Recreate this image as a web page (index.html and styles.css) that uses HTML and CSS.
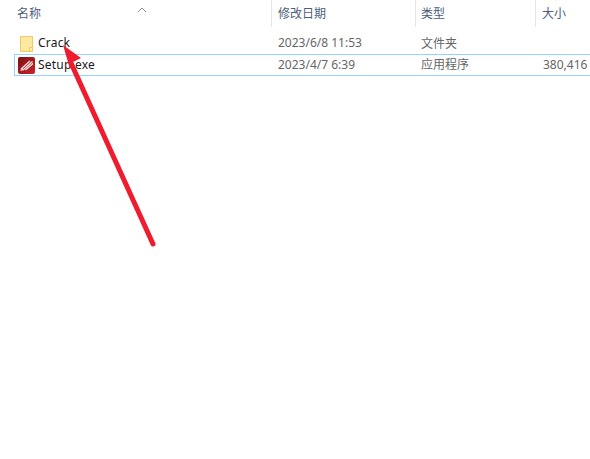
FILE: index.html
```html
<!DOCTYPE html>
<html lang="zh-CN">

<head>
    <meta charset="UTF-8">
    <title>文件列表</title>
    <link rel="stylesheet" href="styles.css">
</head>

<body>
    <div class="explorer">
        <div class="sort-arrow">
            <svg width="10" height="6" viewBox="0 0 10 6">
                <path d="M1 5 L5 1 L9 5" fill="none" stroke="#8a8f96" stroke-width="1"></path>
            </svg>
        </div>

        <div class="header">
            <div class="col col-name">名称</div>
            <div class="col col-date">修改日期</div>
            <div class="col col-type">类型</div>
            <div class="col col-size">大小</div>
        </div>

        <div class="row">
            <div class="cell col-name name-cell">
                <svg class="icon folder-icon" width="13" height="16" viewBox="0 0 13 16">
                    <path d="M0.5 0.5 H12.5 V15.5 H0.5 Z" fill="#fde9a3" stroke="#efca5c"></path>
                    <path d="M9.5 15.5 V11.5 H12.5" fill="#fdf0bd" stroke="#efca5c"></path>
                </svg>
                <span class="file-name">Crack</span>
            </div>
            <div class="cell col-date">2023/6/8 11:53</div>
            <div class="cell col-type">文件夹</div>
            <div class="cell col-size"></div>
        </div>

        <div class="row selected">
            <div class="cell col-name name-cell">
                <svg class="icon setup-icon" width="17" height="17" viewBox="0 0 17 17">
                    <defs>
                        <linearGradient id="setup-red" x1="0" y1="0" x2="1" y2="1">
                            <stop offset="0" stop-color="#7a1015"></stop>
                            <stop offset="1" stop-color="#c8262b"></stop>
                        </linearGradient>
                    </defs>
                    <rect width="17" height="17" rx="2" fill="url(#setup-red)"></rect>
                    <path d="M3 12 L12 4 M5 13 L14.5 4.5 M7.5 13 L15 6.5" stroke="#f6e2e2" stroke-width="1.3" fill="none"></path>
                    <path d="M2 14 L4 11 L6 13 Z" fill="#f6e2e2"></path>
                </svg>
                <span class="file-name">Setup.exe</span>
            </div>
            <div class="cell col-date">2023/4/7 6:39</div>
            <div class="cell col-type">应用程序</div>
            <div class="cell col-size">380,416</div>
        </div>
    </div>

    <svg class="red-arrow" width="590" height="459" viewBox="0 0 590 459">
        <path d="M153 244 L71 63" stroke="#ee1c2e" stroke-width="5" stroke-linecap="round" fill="none"></path>
        <path d="M63 45 L81 58 L73 62 L70 69 Z" fill="#ee1c2e"></path>
    </svg>
</body>

</html>
```

FILE: styles.css
```css
html,
body {
    margin: 0;
    padding: 0;
    height: 100%;
    overflow: hidden;
    background-color: #fff;
}

body {
    font-family: "Noto Sans", "Noto Sans CJK SC", sans-serif;
    font-size: 12px;
    color: #1a1a1a;
}

.explorer {
    padding-left: 14px;
}

.sort-arrow {
    position: absolute;
    top: 0;
    left: 137px;
}

.header {
    display: flex;
    height: 27px;
    margin-bottom: 6px;
    margin-left: -14px;
    color: #4c607a;
}

.header .col {
    box-sizing: border-box;
    line-height: 27px;
    border-right: 1px solid #e5e5e5;
}

.header .col-name {
    width: 272px;
    padding-left: 17px;
}

.header .col-date {
    width: 144px;
    padding-left: 6px;
}

.header .col-type {
    width: 120px;
    padding-left: 5px;
}

.header .col-size {
    flex: 1;
    padding-left: 6px;
    border-right: none;
}

.row {
    display: flex;
    box-sizing: border-box;
    height: 21px;
    padding-bottom: 2px;
    border: 1px solid transparent;
    border-right: none;
    align-items: center;
}

.row.selected {
    height: 22px;
    border-color: #99d1ff;
}

.cell {
    box-sizing: border-box;
    color: #666;
    white-space: nowrap;
}

.row .col-name {
    width: 257px;
    padding-left: 3px;
}

.row .col-date {
    width: 144px;
    padding-left: 6px;
}

.row .col-type {
    width: 120px;
    padding-left: 5px;
}

.row .col-size {
    flex: 1;
    padding-left: 7px;
}

.name-cell {
    display: flex;
    align-items: center;
    color: #1a1a1a;
}

.file-name {
    letter-spacing: 0.2px;
}

.icon {
    flex: none;
}

.folder-icon {
    margin: 2px 5px 0 2px;
}

.setup-icon {
    margin: 2px 3px 0 0;
}

.red-arrow {
    position: absolute;
    top: 0;
    left: 0;
    pointer-events: none;
}
```
